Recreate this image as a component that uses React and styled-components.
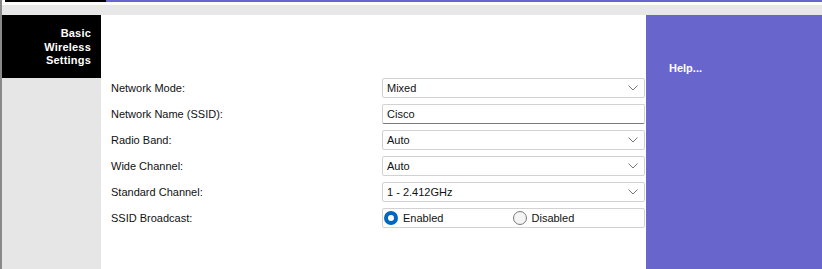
import React from "react";
import styled, { createGlobalStyle } from "styled-components";

const Global = createGlobalStyle`
  html, body { margin: 0; padding: 0; background: #fff; overflow: hidden; }
  body { font-family: "Liberation Sans", Arial, sans-serif; }
`;

const Page = styled.div`
  width: 822px;
  height: 269px;
  border-left: 2px solid #8a8a8a;
  box-sizing: border-box;
  display: flex;
  flex-direction: column;
`;

const TopStrip = styled.div`
  display: flex;
  height: 2px;
  padding-left: 3px;
`;

const StripPart = styled.div`
  background: ${(p) => p.color};
  width: ${(p) => (p.w ? `${p.w}px` : "auto")};
  flex: ${(p) => (p.w ? "none" : "1")};
`;

const Gap = styled.div`
  height: 3px;
  background: #fcfcf8;
`;

const Band = styled.div`
  height: 10px;
  background: #e7e7e7;
`;

const Body = styled.div`
  flex: 1;
  display: flex;
`;

const Side = styled.div`
  width: 99px;
  background: #e6e6e6;
  display: flex;
  flex-direction: column;
`;

const SideTitle = styled.div`
  background: #000;
  color: #fff;
  height: 63px;
  box-sizing: border-box;
  padding: 12px 10px 0 0;
  text-align: right;
  font-size: 11px;
  font-weight: bold;
  line-height: 13.5px;
  letter-spacing: 0.2px;
`;

const Main = styled.div`
  width: 545px;
  padding: 60px 0 0 10px;
  box-sizing: border-box;
  display: flex;
  flex-direction: column;
`;

const Row = styled.div`
  display: flex;
  align-items: center;
  height: 26px;
`;

const Label = styled.div`
  width: 271px;
  font-size: 11px;
  color: #111;
`;

const Control = styled.div`
  width: 263px;
  height: 20px;
  box-sizing: border-box;
  border: 1px solid #d2d2d2;
  border-bottom-color: ${(p) => (p.underline ? "#7a7a7a" : "#d2d2d2")};
  border-radius: 2px;
  background: #fff;
  display: flex;
  align-items: center;
  padding: 0 6px 0 4px;
  font-size: 11px;
  color: #111;
`;

const Value = styled.span`
  flex: 1;
`;

const RadioGroup = styled.div`
  flex: 1;
  display: flex;
  align-items: center;
  gap: 5px;
  margin-left: ${(p) => p.offset || 0}px;
`;

const Dot = styled.span`
  width: 14px;
  height: 14px;
  box-sizing: border-box;
  border-radius: 50%;
  border: ${(p) => (p.on ? "4px solid #0067c0" : "1px solid #7a7a7a")};
  background: ${(p) => (p.on ? "#fff" : "#f4f4f4")};
  flex: none;
`;

const Help = styled.div`
  flex: 1;
  background: #6866cc;
  color: #fff;
  font-size: 11px;
  font-weight: bold;
  padding: 47px 0 0 23px;
`;

const Chevron = () => (
  <svg width="10" height="6" viewBox="0 0 10 6">
    <path d="M0.5 0.5 L5 5 L9.5 0.5" fill="none" stroke="#666" strokeWidth="0.9" />
  </svg>
);

const Select = ({ value }) => (
  <Control>
    <Value>{value}</Value>
    <Chevron />
  </Control>
);

const rows = [
  { label: "Network Mode:", type: "select", value: "Mixed" },
  { label: "Network Name (SSID):", type: "input", value: "Cisco" },
  { label: "Radio Band:", type: "select", value: "Auto" },
  { label: "Wide Channel:", type: "select", value: "Auto" },
  { label: "Standard Channel:", type: "select", value: "1 - 2.412GHz" },
];

export default function App() {
  return (
    <>
      <Global />
      <Page>
        <TopStrip>
          <StripPart color="#000" w={101} />
          <StripPart color="#6866cc" />
        </TopStrip>
        <Gap />
        <Band />
        <Body>
          <Side>
            <SideTitle>
              Basic
              <br />
              Wireless
              <br />
              Settings
            </SideTitle>
          </Side>
          <Main>
            {rows.map((r) => (
              <Row key={r.label}>
                <Label>{r.label}</Label>
                {r.type === "select" ? (
                  <Select value={r.value} />
                ) : (
                  <Control underline>
                    <Value>{r.value}</Value>
                  </Control>
                )}
              </Row>
            ))}
            <Row>
              <Label>SSID Broadcast:</Label>
              <Control>
                <RadioGroup offset={-3}>
                  <Dot on />
                  Enabled
                </RadioGroup>
                <RadioGroup offset={3}>
                  <Dot />
                  Disabled
                </RadioGroup>
              </Control>
            </Row>
          </Main>
          <Help>Help...</Help>
        </Body>
      </Page>
    </>
  );
}
